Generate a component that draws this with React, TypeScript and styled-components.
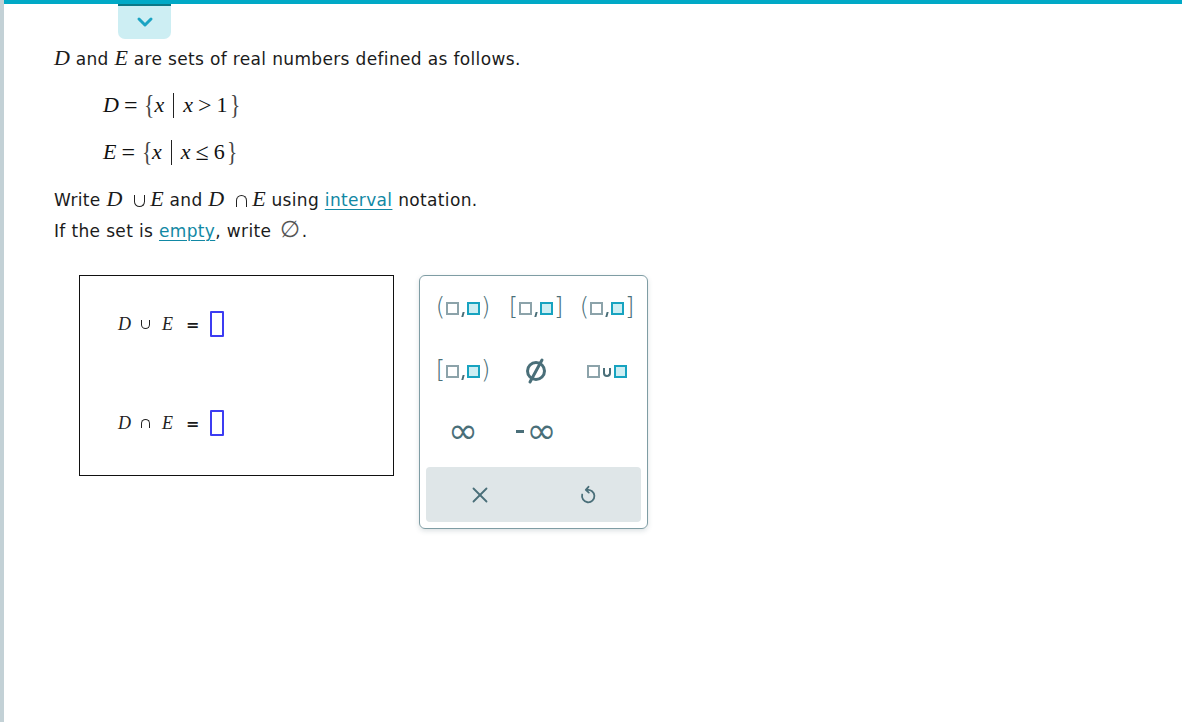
import React from 'react';
import styled, { createGlobalStyle } from 'styled-components';
import { X } from 'lucide-react';

const GlobalStyle = createGlobalStyle`
    html, body {
        margin: 0;
        padding: 0;
        background: #ffffff;
    }
    body {
        font-family: "DejaVu Sans", Verdana, sans-serif;
        color: #1b1b1b;
    }
`;

const Page = styled.div`
    display: flex;
    min-height: 722px;
`;

const LeftRail = styled.div`
    width: 4px;
    flex: none;
    background: #c3d1d6;
`;

const Main = styled.div`
    flex: 1;
    display: flex;
    flex-direction: column;
`;

const TopBar = styled.div`
    height: 4px;
    background: #00a9c6;
`;

const TabRow = styled.div`
    padding-left: 114px;
`;

const Tab = styled.div`
    width: 53px;
    height: 35px;
    box-sizing: border-box;
    border-top: 2px solid #0b7887;
    background: #cdeef3;
    border-radius: 0 0 7px 7px;
    display: flex;
    align-items: center;
    justify-content: center;
    padding-bottom: 2px;
`;

const Content = styled.div`
    padding: 8px 0 0 50px;
`;

const Paragraph = styled.div`
    font-size: 17px;
    line-height: 22px;
    letter-spacing: 0.35px;
`;

const Var = styled.span`
    font-family: "Liberation Serif", "Times New Roman", serif;
    font-style: italic;
    font-size: 22px;
    letter-spacing: 0;
`;

/* union / intersection drawn as a cup or a cap */
const SetOp = styled.span<{ $cap?: boolean, $w: number, $h: number, $ml: number, $mr: number }>`
    display: inline-block;
    width: ${p => p.$w}px;
    height: ${p => p.$h}px;
    box-sizing: border-box;
    border: 1.6px solid #222;
    ${p => (p.$cap ? 'border-bottom: none;' : 'border-top: none;')}
    border-radius: ${p => (p.$cap ? `${p.$w / 2}px ${p.$w / 2}px 0 0` : `0 0 ${p.$w / 2}px ${p.$w / 2}px`)};
    margin: 0 ${p => p.$mr}px 0 ${p => p.$ml}px;
    vertical-align: -1px;
`;

const EmptyGlyph = styled.span`
    font-family: "DejaVu Sans", sans-serif;
    font-size: 23px;
    line-height: 1;
    font-weight: 300;
    color: #555;
    margin: 0 1px 0 9px;
`;

const MathBlock = styled.div`
    padding: 20px 0 0 49px;
    display: flex;
    flex-direction: column;
    gap: 17px;
`;

const MathLine = styled.div`
    font-family: "Liberation Serif", "Times New Roman", serif;
    font-size: 22px;
    line-height: 30px;
    display: flex;
    align-items: center;
    color: #111;
`;

const MathVar = styled.span`
    font-style: italic;
`;

const MathOp = styled.span`
    font-size: 24px;
    margin: 0 5px;
`;

const Brace = styled.span`
    font-size: 27px;
    font-weight: 300;
    color: #444;
    display: inline-block;
    width: 10px;
    text-align: center;
    transform: scaleX(0.8);
    margin: 0 1px;
`;

const Bar = styled.span`
    display: inline-block;
    width: 1px;
    height: 25px;
    background: #222;
    margin: 0 9px;
`;

const Instructions = styled.div`
    padding-top: 21px;
    display: flex;
    flex-direction: column;
    gap: 7px;
`;

const Link = styled.a`
    color: #1188a4;
    text-decoration: underline;
    text-underline-offset: 3px;
    cursor: pointer;
`;

const AnswerArea = styled.div`
    display: flex;
    align-items: flex-start;
    gap: 25px;
    margin: 33px 0 0 25px;
`;

const AnswerBox = styled.div`
    width: 315px;
    height: 201px;
    box-sizing: border-box;
    border: 1px solid #111;
    padding: 35px 0 0 38px;
    display: flex;
    flex-direction: column;
    gap: 73px;
`;

const AnswerRow = styled.div`
    display: flex;
    align-items: center;
    height: 26px;
`;

const RowVar = styled.span`
    font-family: "Liberation Serif", "Times New Roman", serif;
    font-style: italic;
    font-size: 18px;
    color: #222;
`;

const Equals = styled.span`
    font-family: "DejaVu Sans", sans-serif;
    font-weight: bold;
    font-size: 16px;
    margin: 0 11px 0 13px;
`;

const Blank = styled.span`
    display: inline-block;
    width: 14px;
    height: 26px;
    box-sizing: border-box;
    border: 2px solid #3c3cf2;
    border-radius: 1px;
`;

const Palette = styled.div`
    width: 229px;
    height: 254px;
    box-sizing: border-box;
    border: 1px solid #7f9da4;
    border-radius: 6px;
    box-shadow: 0 2px 5px rgba(60, 90, 100, 0.18);
    padding: 12px 6px 6px 6px;
    display: flex;
    flex-direction: column;
`;

const KeyGrid = styled.div`
    display: grid;
    grid-template-columns: 74px 72px 70px;
    grid-template-rows: 40px 86px 34px;
    margin-bottom: 19px;
`;

const Key = styled.div`
    display: flex;
    align-items: center;
    justify-content: center;
    color: #4a6f79;
    cursor: pointer;
`;

const KeyText = styled.span`
    font-family: "DejaVu Sans", sans-serif;
    font-size: 36px;
    color: #4a6f79;
    line-height: 1;
    height: 26px;
    display: flex;
    align-items: center;
`;

const Minus = styled.span`
    display: inline-block;
    width: 8px;
    height: 3px;
    background: #4a6f79;
    margin-right: 3px;
`;

const Paren = styled.span`
    font-family: "DejaVu Sans", sans-serif;
    font-size: 24px;
    font-weight: 300;
    color: #4a6f79;
    line-height: 1;
    margin-top: -3px;
`;

const Slot = styled.span<{ $filled?: boolean }>`
    display: inline-block;
    width: 13px;
    height: 13px;
    box-sizing: border-box;
    border: 2px solid ${p => (p.$filled ? '#17a3c0' : '#8ca3aa')};
    background: ${p => (p.$filled ? '#cdeef3' : 'transparent')};
    margin: 0 1px;
`;

const Comma = styled.span`
    display: inline-block;
    width: 2px;
    height: 5px;
    background: #4a6f79;
    margin: 12px 2px 0 2px;
    transform: skewX(-15deg);
`;

const Cup = styled.span`
    display: inline-block;
    width: 8px;
    height: 9px;
    box-sizing: border-box;
    border: 2px solid #4a6f79;
    border-top: none;
    border-radius: 0 0 4px 4px;
    margin: 2px 2px 0 2px;
`;

const ActionBar = styled.div`
    height: 55px;
    background: #dfe6e8;
    border-radius: 4px;
    display: grid;
    grid-template-columns: 108px 108px;
    align-items: center;
`;

const ActionBtn = styled.div`
    display: flex;
    justify-content: center;
    align-items: center;
    color: #4a6f79;
    cursor: pointer;
`;

function Interval({ left, right }: { left: string, right: string }) {
    return (
        <Key>
            <Paren>{left}</Paren>
            <Slot />
            <Comma />
            <Slot $filled />
            <Paren>{right}</Paren>
        </Key>
    );
}

function Chevron() {
    return (
        <svg width="18" height="12" viewBox="0 0 18 12">
            <path d="M3 3 L9 9 L15 3" fill="none" stroke="#1aa4c3" strokeWidth="3" strokeLinecap="round" strokeLinejoin="round" />
        </svg>
    );
}

function EmptySet() {
    return (
        <svg width="26" height="28" viewBox="0 0 26 28">
            <circle cx="13" cy="14" r="8.5" fill="none" stroke="#4a6f79" strokeWidth="3" />
            <path d="M19 3 L7 25" stroke="#4a6f79" strokeWidth="3" strokeLinecap="round" />
        </svg>
    );
}

function Undo() {
    return (
        <svg width="18" height="20" viewBox="0 0 18 20">
            <path d="M8 5 A6.2 6.2 0 1 1 3.2 9.5" fill="none" stroke="#4a6f79" strokeWidth="1.8" strokeLinecap="round" />
            <path d="M9.5 1.8 L6.8 4.9 L9.8 7.6" fill="none" stroke="#4a6f79" strokeWidth="1.8" strokeLinecap="round" strokeLinejoin="round" />
        </svg>
    );
}

export default function App() {
    return (
        <>
            <GlobalStyle />
            <Page>
                <LeftRail />
                <Main>
                    <TopBar />
                    <TabRow>
                        <Tab><Chevron /></Tab>
                    </TabRow>
                    <Content>
                        <Paragraph>
                            <Var>D</Var> and <Var>E</Var> are sets of real numbers defined as follows.
                        </Paragraph>
                        <MathBlock>
                            <MathLine>
                                <MathVar>D</MathVar><MathOp>=</MathOp><Brace>{'{'}</Brace><MathVar>x</MathVar><Bar /><MathVar>x</MathVar><MathOp>&gt;</MathOp>1<Brace>{'}'}</Brace>
                            </MathLine>
                            <MathLine>
                                <MathVar>E</MathVar><MathOp>=</MathOp><Brace>{'{'}</Brace><MathVar>x</MathVar><Bar /><MathVar>x</MathVar><MathOp>≤</MathOp>6<Brace>{'}'}</Brace>
                            </MathLine>
                        </MathBlock>
                        <Instructions>
                            <Paragraph>
                                Write <Var>D</Var><SetOp $w={11} $h={12} $ml={12} $mr={5} /><Var>E</Var> and <Var>D</Var><SetOp $cap $w={11} $h={12} $ml={12} $mr={5} /><Var>E</Var> using <Link>interval</Link> notation.
                            </Paragraph>
                            <Paragraph>
                                If the set is <Link>empty</Link>, write<EmptyGlyph>∅</EmptyGlyph>.
                            </Paragraph>
                        </Instructions>
                        <AnswerArea>
                            <AnswerBox>
                                <AnswerRow>
                                    <RowVar>D</RowVar><SetOp $w={9} $h={9} $ml={10} $mr={12} /><RowVar>E</RowVar><Equals>=</Equals><Blank />
                                </AnswerRow>
                                <AnswerRow>
                                    <RowVar>D</RowVar><SetOp $cap $w={9} $h={9} $ml={10} $mr={12} /><RowVar>E</RowVar><Equals>=</Equals><Blank />
                                </AnswerRow>
                            </AnswerBox>
                            <Palette>
                                <KeyGrid>
                                    <Interval left="(" right=")" />
                                    <Interval left="[" right="]" />
                                    <Interval left="(" right="]" />
                                    <Interval left="[" right=")" />
                                    <Key><EmptySet /></Key>
                                    <Key><Slot /><Cup /><Slot $filled /></Key>
                                    <Key><KeyText>∞</KeyText></Key>
                                    <Key><Minus /><KeyText>∞</KeyText></Key>
                                    <Key />
                                </KeyGrid>
                                <ActionBar>
                                    <ActionBtn><X size={26} strokeWidth={1.7} /></ActionBtn>
                                    <ActionBtn><Undo /></ActionBtn>
                                </ActionBar>
                            </Palette>
                        </AnswerArea>
                    </Content>
                </Main>
            </Page>
        </>
    );
}
